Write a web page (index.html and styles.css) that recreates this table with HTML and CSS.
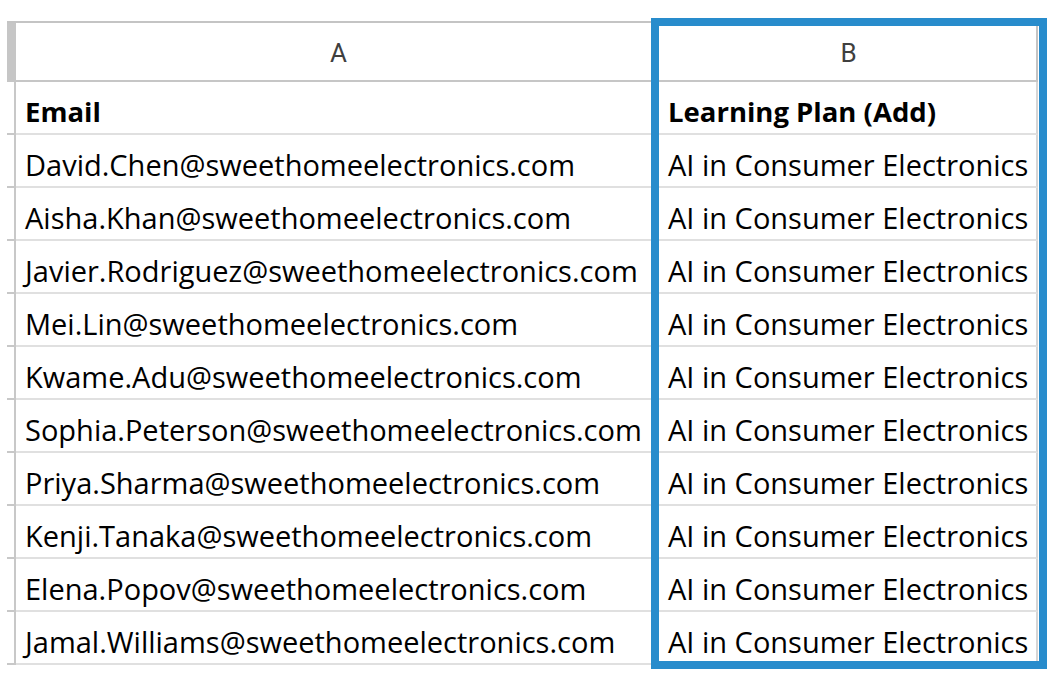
FILE: index.html
```html
<!DOCTYPE html>
<html>
<head>
<meta charset="utf-8">
<link rel="stylesheet" href="styles.css">
</head>
<body>
<div class="wrap">
  <div class="sheet">
    <div class="corner"></div>
    <div class="colhead">A</div>
    <div class="colhead colhead-b">B</div>

    <div class="rowhead"></div>
    <div class="cell bold">Email</div>
    <div class="cell cell-b bold">Learning Plan (Add)</div>

    <div class="rowhead"></div>
    <div class="cell">David.Chen@sweethomeelectronics.com</div>
    <div class="cell cell-b">AI in Consumer Electronics</div>

    <div class="rowhead"></div>
    <div class="cell">Aisha.Khan@sweethomeelectronics.com</div>
    <div class="cell cell-b">AI in Consumer Electronics</div>

    <div class="rowhead"></div>
    <div class="cell">Javier.Rodriguez@sweethomeelectronics.com</div>
    <div class="cell cell-b">AI in Consumer Electronics</div>

    <div class="rowhead"></div>
    <div class="cell">Mei.Lin@sweethomeelectronics.com</div>
    <div class="cell cell-b">AI in Consumer Electronics</div>

    <div class="rowhead"></div>
    <div class="cell">Kwame.Adu@sweethomeelectronics.com</div>
    <div class="cell cell-b">AI in Consumer Electronics</div>

    <div class="rowhead"></div>
    <div class="cell">Sophia.Peterson@sweethomeelectronics.com</div>
    <div class="cell cell-b">AI in Consumer Electronics</div>

    <div class="rowhead"></div>
    <div class="cell">Priya.Sharma@sweethomeelectronics.com</div>
    <div class="cell cell-b">AI in Consumer Electronics</div>

    <div class="rowhead"></div>
    <div class="cell">Kenji.Tanaka@sweethomeelectronics.com</div>
    <div class="cell cell-b">AI in Consumer Electronics</div>

    <div class="rowhead"></div>
    <div class="cell">Elena.Popov@sweethomeelectronics.com</div>
    <div class="cell cell-b">AI in Consumer Electronics</div>

    <div class="rowhead"></div>
    <div class="cell">Jamal.Williams@sweethomeelectronics.com</div>
    <div class="cell cell-b">AI in Consumer Electronics</div>
  </div>
  <div class="selection"></div>
</div>
</body>
</html>
```

FILE: styles.css
```css
html, body {
  margin: 0;
  padding: 0;
  background: #ffffff;
}

.wrap {
  position: relative;
  width: 1053px;
  height: 681px;
  padding: 21px 0 0 7px;
  box-sizing: border-box;
}

.sheet {
  display: grid;
  grid-template-columns: 9px 643px 379px;
  grid-template-rows: 59px repeat(11, 53px);
  width: 1031px;
  border-top: 2px solid #c4c4c4;
  font-family: "Open Sans", "Noto Sans", sans-serif;
}

.corner {
  background: #c6c6c6;
  border-bottom: 2px solid #c6c6c6;
}

.colhead {
  display: flex;
  align-items: center;
  justify-content: center;
  border-bottom: 2px solid #c6c6c6;
  border-right: 2px solid #e2e2e2;
  font-family: "Roboto", "Liberation Sans", sans-serif;
  font-size: 26px;
  color: #3f3f3f;
  padding: 2px 0 0 4px;
}

.colhead-b {
  border-right-color: #c4c4c4;
  padding-left: 2px;
}

.rowhead {
  border-right: 2px solid #c8c8c8;
  border-bottom: 2px solid #c8c8c8;
}

.cell {
  display: flex;
  align-items: center;
  padding: 8px 0 0 9px;
  border-bottom: 2px solid #e0e0e0;
  border-right: 2px solid #e0e0e0;
  font-size: 29px;
  color: #000000;
  white-space: nowrap;
  overflow: hidden;
}

.cell-b {
  padding-left: 9px;
  border-right-color: #d6d6d6;
}

.bold {
  font-weight: 700;
  font-size: 27.5px;
}

.selection {
  position: absolute;
  left: 651px;
  top: 18px;
  width: 396px;
  height: 651px;
  box-sizing: border-box;
  border: 8px solid #288ccc;
  pointer-events: none;
}
```
